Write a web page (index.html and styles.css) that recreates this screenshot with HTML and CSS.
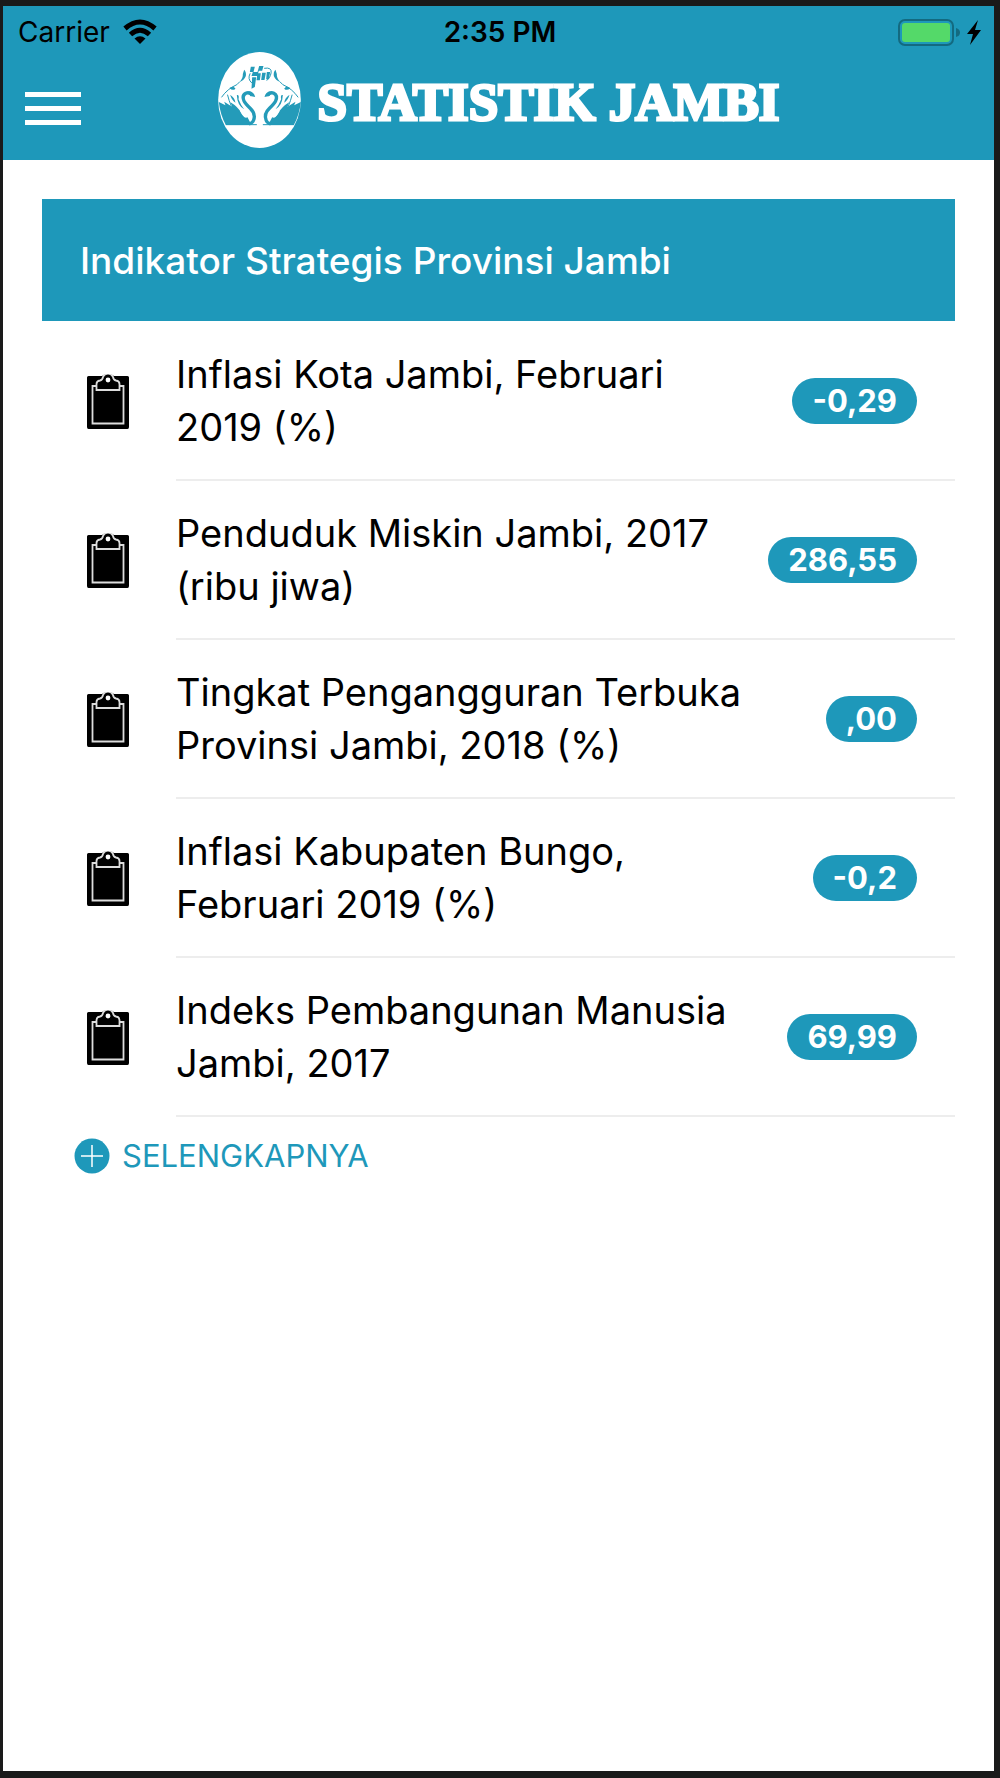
FILE: index.html
```
<!DOCTYPE html>
<html lang="id">
<head>
<meta charset="utf-8">
<meta name="viewport" content="width=device-width, initial-scale=1">
<title>Statistik Jambi</title>
<link rel="stylesheet" href="styles.css">
</head>
<body>
<svg class="sprite" aria-hidden="true">
  <symbol id="clipboard" viewBox="0 0 44 56">
    <path fill="#000" d="M1 3.500Q1 2 2.500 2H16Q18 0 22 0T28 2H41.500Q43 2 43 3.500V53Q43 55 41.500 55H2.500Q1 55 1 53Z"/>
    <path fill="none" stroke="#ddd" stroke-width="1.800" d="M10.500 12H6.500V49.500H37.500V12H33.500M10.500 16V10Q10.500 7 14 6.500Q16.500 6 17 3Q18.500 -.5 22 -.5T27 3Q27.500 6 30 6.500Q33.500 7 33.500 10V16Z"/>
    <circle cx="22" cy="6" r="2.400" fill="#fff"/>
  </symbol>
</svg>
<div class="screen">
  <header class="topbar">
    <div class="status">
      <div class="status-left">
        <span>Carrier</span>
        <svg class="wifi" viewBox="0 0 34 25" aria-hidden="true">
          <path fill="none" stroke="#000" stroke-width="5" d="M2 9.500Q17 -3.500 32 9.500M7.500 15.500Q17 7 26.500 15.500"/>
          <path d="M11.500 19.500Q17 15 22.500 19.500L17 25Z"/>
        </svg>
      </div>
      <span class="time">2:35 PM</span>
      <div class="status-right">
        <svg class="battery" viewBox="0 0 84 28" aria-hidden="true">
          <rect x="1" y="2" width="54" height="25" rx="6" fill="none" stroke="#136a80" stroke-width="2"/>
          <rect x="4" y="5" width="48" height="19" rx="3" fill="#54d969"/>
          <path fill="#136a80" d="M58 10Q62 11 62 14.500T58 19Z"/>
          <path d="M80 2L69 16H75L72 27L83 12H77Z"/>
        </svg>
      </div>
    </div>
    <div class="nav">
      <button class="menu" type="button" aria-label="Menu"><span></span><span></span><span></span></button>
      <h1 class="brand">
        <svg class="logo" viewBox="26 20 248 288" aria-hidden="true">
          <ellipse cx="150" cy="164" rx="124" ry="144" fill="#fff"/>
          <g id="swan">
            <path fill="#249bb9" d="M28 170L48 180L44 169L68 184L63 171Q85 184 98 206Q104 220 114 216L126 239H49Q32 208 28 170Z"/>
            <path fill="none" stroke="#fff" stroke-width="5" d="M94 196Q102 214 112 212Q122 208 114 196"/>
            <path fill="none" stroke="#249bb9" stroke-width="10" d="M128 150Q120 139 109 144Q96 151 104 168Q108 176 122 189Q140 206 132 225Q130 232 118 236"/>
            <path fill="#249bb9" d="M118 138Q134 140 137 155L122 152ZM104 73Q111 80 109 92Q104 105 90 110Q101 99 100 86ZM60 128Q72 120 78 130Q69 138 60 128ZM82 149Q90 147 87 162Q94 180 104 192Q83 180 82 149ZM62 148Q76 157 78 172Q66 164 62 148Z"/>
            <path fill="none" stroke="#249bb9" stroke-width="3" d="M36 156Q54 130 82 118L91 109M66 184Q58 165 54 148"/>
          </g>
          <use href="#swan" transform="translate(302 0) scale(-1 1)"/>
          <path fill="#249bb9" d="M124 64H136L132 80H144L149 62H162L158 76H148L143 92H126L130 80H121ZM128 96H140L136 125L126 130ZM144 84H154L151 105H141ZM158 82H169L165 104H155ZM172 80H182L178 102H170Z"/>
          <path fill="none" stroke="#249bb9" stroke-width="3" d="M122 84Q113 101 127 113M164 69Q187 65 185 82Q181 101 171 105M49 238H142M160 238H253"/>
        </svg>
        <span>STATISTIK JAMBI</span>
      </h1>
    </div>
  </header>
  <main class="content">
    <h2 class="panel-title">Indikator Strategis Provinsi Jambi</h2>
    <ul class="list">
      <li><svg class="icon" aria-hidden="true"><use href="#clipboard"/></svg><div class="item"><span class="label">Inflasi Kota Jambi, Februari 2019 (%)</span><span class="badge">-0,29</span></div></li>
      <li><svg class="icon" aria-hidden="true"><use href="#clipboard"/></svg><div class="item"><span class="label">Penduduk Miskin Jambi, 2017 (ribu jiwa)</span><span class="badge">286,55</span></div></li>
      <li><svg class="icon" aria-hidden="true"><use href="#clipboard"/></svg><div class="item"><span class="label">Tingkat Pengangguran Terbuka Provinsi Jambi, 2018 (%)</span><span class="badge">,00</span></div></li>
      <li><svg class="icon" aria-hidden="true"><use href="#clipboard"/></svg><div class="item"><span class="label">Inflasi Kabupaten Bungo, Februari 2019 (%)</span><span class="badge">-0,2</span></div></li>
      <li><svg class="icon" aria-hidden="true"><use href="#clipboard"/></svg><div class="item"><span class="label">Indeks Pembangunan Manusia Jambi, 2017</span><span class="badge">69,99</span></div></li>
    </ul>
    <a class="more" href="#">
      <svg class="plus" viewBox="0 0 36 36" aria-hidden="true"><circle cx="18" cy="18" r="17.500" fill="#1e98ba"/><path stroke="#fff" stroke-width="1.500" d="M7 18H29M18 7V29"/></svg>
      <span>SELENGKAPNYA</span>
    </a>
  </main>
</div>
</body>
</html>
```
FILE: styles.css
```
* { box-sizing: border-box; }
body {
  margin: 0;
  min-height: 100vh;
  display: flex;
  padding: 6px 6px 7px 3px;
  background: #1a1a1a;
  color: #000;
  font-family: Inter, "Liberation Sans", sans-serif;
}
.sprite { position: absolute; width: 0; height: 0; }
.screen { flex: 1; min-width: 0; background: #fff; }
.topbar { background: #1e98ba; padding-bottom: 12px; }
.status {
  display: grid;
  grid-template-columns: 1fr auto 1fr;
  align-items: center;
  height: 46px;
  padding: 5px 12px 0 15px;
  font-size: 28px;
}
.status-left { display: flex; align-items: center; gap: 13px; }
.status-right { display: flex; justify-content: flex-end; }
.wifi { width: 34px; height: 25px; }
.battery { width: 84px; height: 28px; }
.time { font-weight: 600; }
.nav {
  display: grid;
  grid-template-columns: 1fr auto 1fr;
  height: 96px;
}
.menu {
  justify-self: start;
  align-self: center;
  display: flex;
  flex-direction: column;
  gap: 9px;
  margin: 17px 0 0 22px;
  padding: 0;
  border: 0;
  background: none;
}
.menu span { width: 56px; height: 5px; background: #fff; }
.brand {
  display: flex;
  align-items: center;
  gap: 17px;
  margin: 0;
  color: #fff;
  font: bold 53px/60px "Liberation Serif", serif;
  white-space: nowrap;
  -webkit-text-stroke: 3px #fff;
}
.brand span { padding-top: 4px; }
.logo { width: 83px; height: 96px; }
.content { padding: 39px; }
.panel-title {
  margin: 0;
  padding: 36px 38px 34px;
  background: #1e98ba;
  color: #fff;
  font-size: 37px;
  font-weight: 500;
  line-height: 52px;
}
.list { margin: 0; padding: 1px 0 0 44px; list-style: none; }
.list li { display: flex; align-items: center; gap: 46px; }
.icon { flex: none; width: 44px; height: 56px; }
.item {
  flex: 1;
  display: flex;
  align-items: center;
  justify-content: space-between;
  padding: 26px 38px 25px 0;
  border-bottom: 2px solid #ededed;
}
.label { max-width: 576px; font-size: 38px; line-height: 53px; }
.badge {
  flex: none;
  padding: 0 20px;
  border-radius: 23px;
  background: #1e98ba;
  color: #fff;
  font-size: 31px;
  font-weight: 700;
  line-height: 46px;
}
.more {
  display: inline-flex;
  align-items: center;
  gap: 12px;
  margin: 19px 0 0 32px;
  color: #1e98ba;
  font-size: 31px;
  line-height: 40px;
  text-decoration: none;
}
.plus { width: 36px; height: 36px; }
```
